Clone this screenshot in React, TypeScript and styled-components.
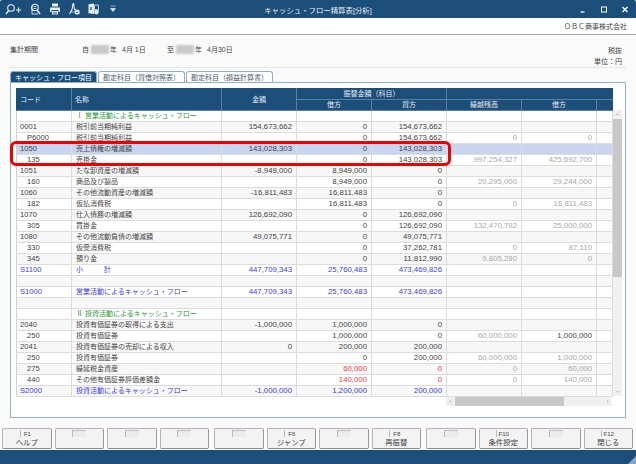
import React from 'react'
import styled, { createGlobalStyle } from 'styled-components'

const NAVY = '#1c4e7a'
const FONT = '"Liberation Sans", "Noto Sans CJK JP", sans-serif'

const Global = createGlobalStyle`
  html, body { margin: 0; padding: 0; background: #fff; }
  * { box-sizing: border-box; }
`

const Window = styled.div`
  width: 636px;
  height: 464px;
  display: flex;
  flex-direction: column;
  overflow: hidden;
  font-family: ${FONT};
  color: #444;
  background: #fafafa;
`

const TitleBar = styled.div`
  height: 18px;
  flex: none;
  display: grid;
  grid-template-columns: 1fr auto 1fr;
  align-items: center;
  background: ${NAVY};
  color: #e8eef4;
  font-size: 7.4px;
  border-radius: 2px 2px 0 0;
`

const Tools = styled.div`
  display: flex;
  align-items: center;
  gap: 8px;
  padding-left: 5px;
`

const WinButtons = styled.div`
  display: flex;
  justify-content: flex-end;
  align-items: center;
  gap: 15px;
  padding-right: 8px;
`

const CompanyBar = styled.div`
  height: 17px;
  flex: none;
  display: flex;
  align-items: center;
  justify-content: flex-end;
  padding-right: 9px;
  background: #fff;
  border-bottom: 1px solid #aaa;
  font-size: 7px;
`

const Body = styled.div`
  flex: 1;
  display: flex;
  flex-direction: column;
  padding: 0 10px;
`

const Period = styled.div`
  height: 33px;
  flex: none;
  display: flex;
  justify-content: space-between;
  padding: 10px 4px 0 0;
  border-bottom: 1px solid #e6e6e6;
  font-size: 7px;
`

const PeriodLeft = styled.div`
  display: flex;
  align-items: flex-start;
  height: 10px;
  line-height: 10px;
`

const PeriodLabel = styled.span`
  width: 72px;
`

const PeriodGroup = styled.span`
  width: 85px;
  display: flex;
  gap: 1px;
`

const Masked = styled.i`
  width: 18px;
  height: 9px;
  margin: 0 0 0 1px;
  background: #c9c9c9;
  filter: blur(1px);
`

const Day = styled.span`
  margin-left: 4px;
`

const PeriodRight = styled.div`
  text-align: right;
  line-height: 11px;
`

const Tabs = styled.div`
  height: 11px;
  margin-top: 3px;
  flex: none;
  display: flex;
  gap: 1px;
`

const Tab = styled.div<{ $active?: boolean }>`
  width: 87px;
  text-align: center;
  font-size: 7px;
  line-height: 11px;
  border: 1px solid #8fb0cc;
  border-bottom: 0;
  border-radius: 3px 3px 0 0;
  background: ${(p) => (p.$active ? NAVY : '#fff')};
  color: ${(p) => (p.$active ? '#fff' : '#4a5a68')};
`

const Panel = styled.div`
  height: 336px;
  flex: none;
  padding: 5px 0 0 5px;
  background: #fff;
  border: 1px solid #8fb0cc;
`

const GridRow = styled.div`
  display: flex;
  align-items: stretch;
`

const Sheet = styled.table`
  width: 596px;
  flex: none;
  table-layout: fixed;
  border-collapse: collapse;
  font-size: 7px;
`

const Head = styled.th<{ $left?: boolean }>`
  height: 11px;
  padding: 0 ${(p) => (p.$left ? '3px' : '0')};
  background: ${NAVY};
  color: #e4ebf2;
  font-weight: normal;
  font-size: 7px;
  line-height: 10px;
  text-align: ${(p) => (p.$left ? 'left' : 'center')};
  border: 1px solid #5d7f9d;
  border-top-color: ${NAVY};
  &:first-child { border-left-color: ${NAVY}; }
  &:last-child { border-right-color: ${NAVY}; }
`

const Row = styled.tr<{ $alt?: boolean; $hot?: boolean }>`
  background: ${(p) => (p.$hot ? '#c9d5f0' : p.$alt ? '#f7f7f7' : '#fff')};
`

const tones = { dark: '#444', blue: '#3c3cf0', green: '#1f9a32', red: '#f03c3c', dim: '#a8a8a8' }
type Tone = keyof typeof tones

const Code = styled.td<{ $tone: Tone; $sub?: boolean }>`
  height: 11px;
  padding: 0 0 0 ${(p) => (p.$sub ? '10px' : '3px')};
  border: 1px solid #dcdcdc;
  border-left-color: #d0d0d0;
  font-size: 7.6px;
  line-height: 10px;
  white-space: nowrap;
  color: ${(p) => tones[p.$tone]};
`

const Name = styled.td<{ $tone: Tone }>`
  padding: 0 0 0 4px;
  border: 1px solid #dcdcdc;
  font-size: 7px;
  line-height: 10px;
  white-space: nowrap;
  overflow: hidden;
  color: ${(p) => tones[p.$tone]};
`

const Num = styled.td<{ $tone: Tone }>`
  padding: 0 4px 0 0;
  border: 1px solid #dcdcdc;
  font-size: 7.8px;
  line-height: 10px;
  text-align: right;
  white-space: nowrap;
  color: ${(p) => tones[p.$tone]};
`

const VScroll = styled.div`
  width: 9px;
  margin-top: 22px;
  height: 286px;
  flex: none;
  display: flex;
  flex-direction: column;
  background: #f0f0f0;
`

const Arrow = styled.div`
  height: 9px;
  flex: none;
  display: flex;
  align-items: center;
  justify-content: center;
`

const VThumb = styled.div`
  height: 158px;
  flex: none;
  background: #c8c8c8;
`

const Spacer = styled.div`
  flex: 1;
`

const HScroll = styled.div`
  width: 166px;
  height: 9px;
  margin-left: 430px;
  display: flex;
  background: #f0f0f0;
`

const HArrow = styled(Arrow)`
  width: 9px;
`

const HThumb = styled.div`
  width: 109px;
  background: #c8c8c8;
`

const CalloutBox = styled.div`
  position: absolute;
  left: 10px;
  top: 141px;
  width: 441px;
  height: 25px;
  border: 3px solid #f00000;
  border-radius: 6px;
`

const KeyBar = styled.div`
  height: 22px;
  margin-top: 10px;
  flex: none;
  display: flex;
  gap: 5px;
  padding-left: 2px;
`

const KeyGroup = styled.div`
  display: flex;
  gap: 3px;
`

const Key = styled.div`
  width: 49.5px;
  height: 21px;
  display: flex;
  flex-direction: column;
  align-items: center;
  background: #f3f3f3;
  border: 1px solid #b4b4b4;
  border-bottom-color: #8c8c8c;
  border-right-color: #999;
  border-radius: 2px;
  color: #444;
`

const KeyCap = styled.div<{ $empty?: boolean }>`
  min-width: 14px;
  height: 7px;
  margin-top: 1px;
  font-size: 6px;
  line-height: 7px;
  text-align: center;
  border-top: 1px solid ${(p) => (p.$empty ? '#bbb' : 'transparent')};
  border-left: 1px solid #bbb;
  background: ${(p) => (p.$empty ? '#ececec' : 'transparent')};
`

const KeyLabel = styled.div`
  font-size: 7.4px;
  line-height: 10px;
  margin-top: 1px;
`

const Footer = styled.div`
  height: 14px;
  flex: none;
  position: relative;
  background: ${NAVY};
`

const Grip = styled.svg`
  position: absolute;
  right: 0;
  bottom: 0;
`

type Cells = {
  code?: string
  name?: string
  tone?: Tone
  sub?: boolean
  hot?: boolean
  amount?: string
  dr?: string
  cr?: string
  moveTone?: Tone
  bal?: string
  last?: string
  lastTone?: Tone
}

const rows: Cells[] = [
  { name: 'Ⅰ 営業活動によるキャッシュ・フロー', tone: 'green' },
  { code: '0001', name: '税引前当期純利益', amount: '154,673,662', dr: '0', cr: '154,673,662' },
  { code: 'P6000', sub: true, name: '税引前当期純利益', dr: '0', cr: '154,673,662', bal: '0', last: '0' },
  { code: '1050', name: '売上債権の増減額', amount: '143,028,303', dr: '0', cr: '143,028,303', hot: true },
  { code: '135', sub: true, name: '売掛金', dr: '0', cr: '143,028,303', bal: '997,254,327', last: '425,692,700' },
  { code: '1051', name: 'たな卸資産の増減額', amount: '-8,949,000', dr: '8,949,000', cr: '0' },
  { code: '160', sub: true, name: '商品及び製品', dr: '8,949,000', cr: '0', bal: '20,295,000', last: '29,244,000' },
  { code: '1060', name: 'その他流動資産の増減額', amount: '-16,811,483', dr: '16,811,483', cr: '0' },
  { code: '182', sub: true, name: '仮払消費税', dr: '16,811,483', cr: '0', bal: '0', last: '16,811,483' },
  { code: '1070', name: '仕入債務の増減額', amount: '126,692,090', dr: '0', cr: '126,692,090' },
  { code: '305', sub: true, name: '買掛金', dr: '0', cr: '126,692,090', bal: '132,470,792', last: '25,000,000' },
  { code: '1080', name: 'その他流動負債の増減額', amount: '49,075,771', dr: '0', cr: '49,075,771' },
  { code: '330', sub: true, name: '仮受消費税', dr: '0', cr: '37,262,781', bal: '0', last: '87,110' },
  { code: '345', sub: true, name: '預り金', dr: '0', cr: '11,812,990', bal: '9,805,280', last: '0' },
  { code: 'S1100', name: '小　　　計', tone: 'blue', amount: '447,709,343', dr: '25,760,483', cr: '473,469,826' },
  {},
  { code: 'S1000', name: '営業活動によるキャッシュ・フロー', tone: 'blue', amount: '447,709,343', dr: '25,760,483', cr: '473,469,826' },
  {},
  { name: 'Ⅱ 投資活動によるキャッシュ・フロー', tone: 'green' },
  { code: '2040', name: '投資有価証券の取得による支出', amount: '-1,000,000', dr: '1,000,000', cr: '0' },
  { code: '250', sub: true, name: '投資有価証券', dr: '1,000,000', cr: '0', bal: '60,000,000', last: '1,000,000', lastTone: 'dark' },
  { code: '2041', name: '投資有価証券の売却による収入', amount: '0', dr: '200,000', cr: '200,000' },
  { code: '250', sub: true, name: '投資有価証券', dr: '0', cr: '200,000', bal: '60,000,000', last: '1,000,000' },
  { code: '275', sub: true, name: '繰延税金資産', dr: '60,000', cr: '0', moveTone: 'red', bal: '0', last: '60,000' },
  { code: '440', sub: true, name: 'その他有価証券評価差額金', dr: '140,000', cr: '0', moveTone: 'red', bal: '0', last: '140,000' },
  { code: 'S2000', name: '投資活動によるキャッシュ・フロー', tone: 'blue', amount: '-1,000,000', dr: '1,200,000', cr: '200,000' },
]

const keys = [
  [['F1', 'ヘルプ'], [], [], []],
  [[], ['F6', 'ジャンプ'], [], ['F8', '再振替']],
  [[], ['F10', '条件設定'], [], ['F12', '閉じる']],
]

function ToolIcons () {
  const s = { fill: 'none', stroke: '#e6edf4', strokeWidth: 1.1 }
  return (
    <Tools>
      <svg width="17" height="12" viewBox="0 0 17 12">
        <circle cx="6" cy="5" r="3.3" {...s} />
        <path d="M3.6 7.6 1 11" {...s} strokeWidth="1.4" />
        <path d="M11 7h5M13.5 4.5v5" {...s} />
      </svg>
      <svg width="11" height="12" viewBox="0 0 11 12">
        <circle cx="5" cy="4.5" r="3.3" {...s} />
        <path d="M7 7l3 4" {...s} strokeWidth="1.5" />
        <path d="M2 3v8h6" {...s} strokeWidth="0.9" />
        <path d="M3.5 3.5h3M3.5 5.5h3" {...s} strokeWidth="0.8" />
      </svg>
      <svg width="12" height="12" viewBox="0 0 12 12">
        <path d="M3 0.5h6v3H3z" fill="#e6edf4" />
        <path d="M1 4.5h10v4.5H9.5V7h-7v2H1z" fill="#e6edf4" />
        <path d="M3 8h6v3.5H3z" fill="#e6edf4" />
        <path d="M4 9.3h4M4 10.5h4" stroke={NAVY} strokeWidth="0.6" />
      </svg>
      <svg width="11" height="12" viewBox="0 0 11 12">
        <path d="M0.5 11C2 9 4 5 3.8 1.5 3.7 0 5 0.5 4.8 2 4.6 4.5 6 7 7 8.2" {...s} />
        <path d="M1.5 9h5" {...s} strokeWidth="0.7" />
        <circle cx="8.2" cy="9" r="2.6" fill="#e6edf4" />
        <path d="M7 9l1 1 1.5-1.7" fill="none" stroke={NAVY} strokeWidth="0.7" />
      </svg>
      <svg width="11" height="12" viewBox="0 0 11 12">
        <path d="M0.5 1.2 6 0.5v10.5l-5.5-0.8z" fill="#e6edf4" />
        <path d="M6.5 2h4v5h-4z" fill="none" stroke="#e6edf4" strokeWidth="0.8" />
        <path d="M2 4l2 3M4 4L2 7" stroke={NAVY} strokeWidth="0.7" />
        <circle cx="8.4" cy="9" r="2.4" fill="#e6edf4" />
      </svg>
      <svg width="12" height="12" viewBox="0 0 12 12">
        <path d="M3.5 3h5M3.5 5.5h5L6 8.5z" fill="#e6edf4" stroke="#e6edf4" strokeWidth="0.6" />
      </svg>
    </Tools>
  )
}

function WindowIcons () {
  return (
    <WinButtons>
      <svg width="6" height="7" viewBox="0 0 6 7"><path d="M0.5 6h4" stroke="#fff" strokeWidth="1.2" /></svg>
      <svg width="6" height="7" viewBox="0 0 6 7"><rect x="0.5" y="1" width="5" height="5" fill="none" stroke="#fff" strokeWidth="1" /></svg>
      <svg width="6" height="7" viewBox="0 0 6 7"><path d="M0.5 1l5 5M5.5 1l-5 5" stroke="#fff" strokeWidth="1.3" /></svg>
    </WinButtons>
  )
}

function Chevron ({ rotate }: { rotate: number }) {
  return (
    <svg width="5" height="5" viewBox="0 0 5 5" style={{ transform: `rotate(${rotate}deg)` }}>
      <path d="M0.8 3.3 2.5 1.6 4.2 3.3" fill="none" stroke="#aaa" strokeWidth="0.8" />
    </svg>
  )
}

function DataRow ({ row, alt }: { row: Cells; alt: boolean }) {
  const tone = row.tone || 'dark'
  const move = row.moveTone || tone
  return (
    <Row $alt={alt} $hot={row.hot}>
      <Code $tone={tone} $sub={row.sub}>{row.code}</Code>
      <Name $tone={tone}>{row.name}</Name>
      <Num $tone={tone}>{row.amount}</Num>
      <Num $tone={move}>{row.dr}</Num>
      <Num $tone={move}>{row.cr}</Num>
      <Num $tone="dim">{row.bal}</Num>
      <Num $tone={row.lastTone || 'dim'}>{row.last}</Num>
      <Num $tone="dim" />
    </Row>
  )
}

export default function App () {
  return (
    <Window>
      <Global />
      <TitleBar>
        <ToolIcons />
        <span>キャッシュ・フロー精算表[分析]</span>
        <WindowIcons />
      </TitleBar>
      <CompanyBar>ＯＢＣ商事株式会社</CompanyBar>
      <Body>
        <Period>
          <PeriodLeft>
            <PeriodLabel>集計期間</PeriodLabel>
            <PeriodGroup>自<Masked />年<Day>4月 1日</Day></PeriodGroup>
            <PeriodGroup>至<Masked />年<Day>4月30日</Day></PeriodGroup>
          </PeriodLeft>
          <PeriodRight>税抜<br />単位：円</PeriodRight>
        </Period>
        <Tabs>
          <Tab $active>キャッシュ・フロー項目</Tab>
          <Tab>勘定科目（貸借対照表）</Tab>
          <Tab>勘定科目（損益計算書）</Tab>
        </Tabs>
        <Panel>
          <GridRow>
            <Sheet>
              <colgroup>
                <col width="55" />
                <col width="150" />
                <col width="75" />
                <col width="75" />
                <col width="75" />
                <col width="75" />
                <col width="75" />
                <col width="16" />
              </colgroup>
              <thead>
                <tr>
                  <Head $left rowSpan={2}>コード</Head>
                  <Head $left rowSpan={2}>名称</Head>
                  <Head rowSpan={2}>金額</Head>
                  <Head colSpan={2}>振替金額（科目）</Head>
                  <Head colSpan={3} />
                </tr>
                <tr>
                  <Head>借方</Head>
                  <Head>貸方</Head>
                  <Head>繰越残高</Head>
                  <Head>借方</Head>
                  <Head />
                </tr>
              </thead>
              <tbody>
                {rows.map((row, i) => <DataRow key={i} row={row} alt={i % 2 === 1} />)}
              </tbody>
            </Sheet>
            <VScroll>
              <Arrow><Chevron rotate={0} /></Arrow>
              <VThumb />
              <Spacer />
              <Arrow><Chevron rotate={180} /></Arrow>
            </VScroll>
          </GridRow>
          <HScroll>
            <HArrow><Chevron rotate={-90} /></HArrow>
            <HThumb />
            <Spacer />
            <HArrow><Chevron rotate={90} /></HArrow>
          </HScroll>
        </Panel>
        <CalloutBox />
      </Body>
      <KeyBar>
        {keys.map((group, g) => (
          <KeyGroup key={g}>
            {group.map((k, i) => (
              <Key key={i}>
                <KeyCap $empty={!k[0]}>{k[0]}</KeyCap>
                <KeyLabel>{k[1]}</KeyLabel>
              </Key>
            ))}
          </KeyGroup>
        ))}
      </KeyBar>
      <Footer>
        <Grip width="8" height="8" viewBox="0 0 8 8"><path d="M8 0v8H0z" fill="#8aa5bd" /></Grip>
      </Footer>
    </Window>
  )
}
